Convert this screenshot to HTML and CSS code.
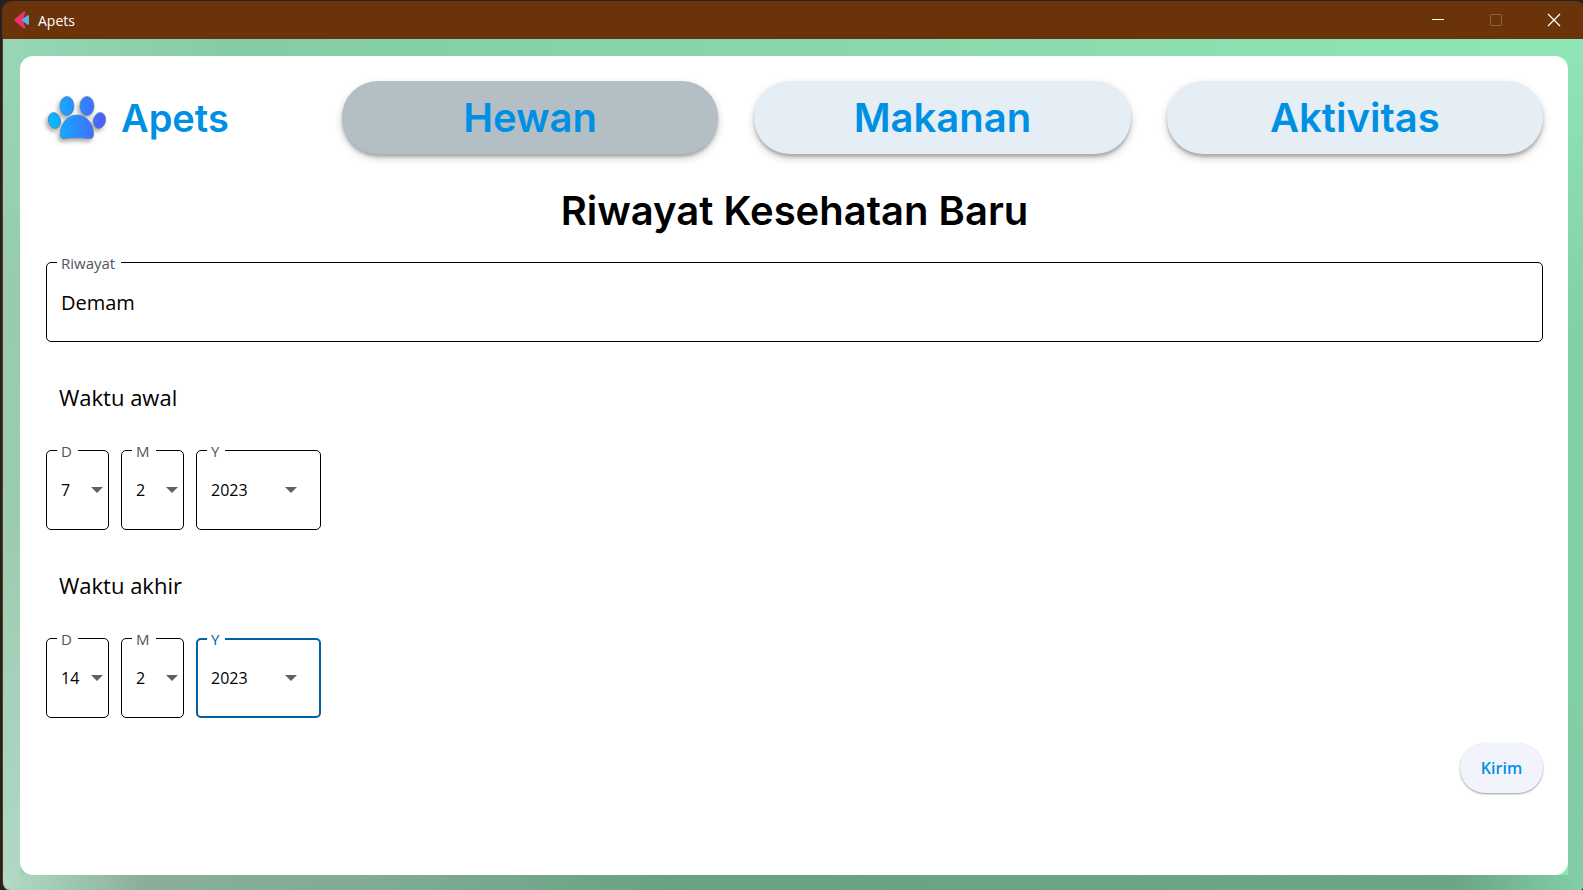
FILE: index.html
```html
<!DOCTYPE html>
<html lang="id">
<head>
<meta charset="utf-8">
<title>Apets</title>
<link rel="stylesheet" href="styles.css">
</head>
<body>
<div class="window">
  <header class="titlebar">
    <svg class="titlebar-icon" viewBox="0 0 16 18" aria-hidden="true">
      <path d="M10 .3Q11.500-.2 11.300 1.500L9 9l2.300 7.500q.2 1.700-1.300 1.200L1 10.200Q0 9 1 7.800z" fill="#ee316b"/>
      <path d="M7.500 9l5.500-4.500q2-.8 2 1V12.500q0 1.800-2 1z" fill="#54b5e0"/>
    </svg>
    <span class="titlebar-text">Apets</span>
    <div class="window-controls">
      <button class="window-button" type="button" aria-label="Minimize"><svg viewBox="0 0 12 12"><path d="M0 5.500h12" /></svg></button>
      <button class="window-button" type="button" aria-label="Maximize" disabled><svg viewBox="0 0 12 12"><rect x=".5" y=".5" width="11" height="11" rx="1"/></svg></button>
      <button class="window-button" type="button" aria-label="Close"><svg viewBox="0 0 12 12"><path d="M0 0l12 12M12 0L0 12" stroke-width="1.300"/></svg></button>
    </div>
  </header>
  <div class="backdrop">
    <main class="card">
      <div class="topbar">
        <a class="brand" href="#">
          <svg class="brand-logo" viewBox="1 -2 62 50" aria-hidden="true">
            <defs><linearGradient id="paw" gradientUnits="userSpaceOnUse" x1="3" y1="0" x2="61" y2="0"><stop offset="0" stop-color="#00c0ff"/><stop offset="1" stop-color="#5558ff"/></linearGradient></defs>
            <g fill="url(#paw)" stroke="#4f7fae" stroke-width=".7">
              <ellipse cx="22" cy="11" rx="7" ry="9.500"/>
              <ellipse cx="42" cy="11" rx="7" ry="9.500"/>
              <ellipse cx="9.500" cy="25.500" rx="6" ry="8" transform="rotate(-15 9.500 25.500)"/>
              <ellipse cx="54.500" cy="25.500" rx="6" ry="8" transform="rotate(15 54.500 25.500)"/>
              <path d="M15.500 40C15 28 23 20 32 20s17 8 16.500 20c-.2 3-2 4-5 3.500-7-1-16-1-23 0-3 .5-4.800-.5-5-3.500z"/>
            </g>
          </svg>
          <span class="brand-name">Apets</span>
        </a>
        <nav class="tabs">
          <button class="tab tab-active" type="button" aria-current="page">Hewan</button>
          <button class="tab" type="button">Makanan</button>
          <button class="tab" type="button">Aktivitas</button>
        </nav>
      </div>
      <h1 class="title">Riwayat Kesehatan Baru</h1>
      <form class="form">
        <div class="field">
          <label class="field-label" for="riwayat">Riwayat</label>
          <input class="control control-text" id="riwayat" type="text" value="Demam">
        </div>
        <h2 class="section">Waktu awal</h2>
        <div class="dates">
          <div class="field field-short">
            <label class="field-label" for="d1">D</label>
            <select class="control" id="d1"><option>7</option></select>
            <span class="arrow"></span>
          </div>
          <div class="field field-short">
            <label class="field-label" for="m1">M</label>
            <select class="control" id="m1"><option>2</option></select>
            <span class="arrow"></span>
          </div>
          <div class="field field-year">
            <label class="field-label" for="y1">Y</label>
            <select class="control" id="y1"><option>2023</option></select>
            <span class="arrow"></span>
          </div>
        </div>
        <h2 class="section">Waktu akhir</h2>
        <div class="dates">
          <div class="field field-short">
            <label class="field-label" for="d2">D</label>
            <select class="control" id="d2"><option>14</option></select>
            <span class="arrow"></span>
          </div>
          <div class="field field-short">
            <label class="field-label" for="m2">M</label>
            <select class="control" id="m2"><option>2</option></select>
            <span class="arrow"></span>
          </div>
          <div class="field field-year field-focused">
            <label class="field-label" for="y2">Y</label>
            <select class="control" id="y2"><option>2023</option></select>
            <span class="arrow"></span>
          </div>
        </div>
        <button class="submit" type="button">Kirim</button>
      </form>
    </main>
  </div>
</div>
</body>
</html>
```
FILE: styles.css
```css
* { box-sizing: border-box; }

body {
  margin: 0;
  background: #222;
  font-family: "Open Sans", "Noto Sans", sans-serif;
  color: #000;
}

button, input, select { font: inherit; color: inherit; }

.window {
  display: flex;
  flex-direction: column;
  min-height: 100vh;
  padding: 1px 0 0 2px;
}

.titlebar {
  display: flex;
  align-items: center;
  height: 38px;
  padding-left: 12px;
  background: #6b330a;
  border-radius: 10px 6px 0 0;
  color: #fff;
}

.titlebar-icon { width: 16px; height: 18px; }

.titlebar-text {
  margin-left: 8px;
  font-size: 14px;
}

.window-controls { display: flex; margin-left: auto; }

.window-button {
  display: grid;
  place-items: center;
  width: 58px;
  height: 38px;
  padding: 0;
  border: 0;
  background: none;
}

.window-button svg {
  width: 12px;
  height: 12px;
  fill: none;
  stroke: #fff;
  overflow: visible;
}

.window-button:disabled svg { stroke: #8f653f; }

.backdrop {
  display: flex;
  flex: 1;
  padding: 17px 15px 15px 17px;
  border-left: 1px solid #6b330a;
  border-radius: 0 0 4px 8px;
  background:
    linear-gradient(90deg, #b2dcc6, #8bae9b 9%, #7fab94 25%, #69a382 42%, #6ca685 92%, #82cfa6) bottom / 100% 15px no-repeat,
    linear-gradient(#8fe6b6, #83d0a6 35%, #82cda5) right / 15px 100% no-repeat,
    linear-gradient(#97d7b5, #97cbae 30%, #9ccdb3 60%, #b0d9c4) left / 17px 100% no-repeat,
    linear-gradient(90deg, #97d7b5, #84cca5 15%, #8fe6b6);
}

.card {
  flex: 1;
  min-width: 0;
  padding: 25px 25px 25px 26px;
  background: #fff;
  border-radius: 13px;
}

.topbar {
  display: flex;
  align-items: center;
}

.brand {
  display: flex;
  align-items: center;
  flex: 0 0 296px;
  gap: 13px;
  color: #0090e3;
  font-family: Inter, sans-serif;
  font-size: 38px;
  font-weight: 600;
  text-decoration: none;
}

.brand-logo {
  width: 62px;
  height: 50px;
  overflow: visible;
  filter: drop-shadow(-2px 3px 2px #0005);
}

.tabs {
  display: grid;
  flex: 1;
  grid-template-columns: repeat(3, 1fr);
  gap: 36px;
}

.tab {
  height: 73px;
  padding: 0;
  border: 0;
  border-radius: 36px;
  background: #e5edf5;
  box-shadow: 0 3px 3px #0003, 0 4px 8px #0003;
  color: #0090e3;
  font-family: Inter, sans-serif;
  font-size: 40px;
  font-weight: 600;
  line-height: 48px;
}

.tab-active { background: #b4bec5; }

.title {
  margin: 32px 0 26px;
  font-family: Inter, sans-serif;
  font-size: 40px;
  font-weight: 600;
  line-height: 50px;
  text-align: center;
}

.field {
  position: relative;
  height: 80px;
}

.field-short { width: 63px; }
.field-year { width: 125px; }

.field-label {
  position: absolute;
  top: -8px;
  left: 11px;
  padding: 0 6px 0 4px;
  background: #fff;
  color: #50545c;
  font-size: 15px;
  line-height: 18px;
}

.control {
  appearance: none;
  display: block;
  width: 100%;
  height: 100%;
  padding: 0 0 0 14px;
  border: 1px solid #000;
  border-radius: 5px;
  outline: 0;
  background: none;
  font-size: 16px;
}

.control-text {
  padding-left: 14px;
  font-size: 20px;
}

.field-focused .control {
  border: 2px solid #0061a4;
  padding-left: 13px;
}

.field-focused .field-label { color: #0061a4; }

.arrow {
  position: absolute;
  top: 37px;
  right: 6px;
  border: 6px solid transparent;
  border-top-color: #616161;
  border-bottom: 0;
  pointer-events: none;
}

.field-year .arrow { right: 24px; }

.section {
  margin: 40px 0 38px 13px;
  font-size: 22px;
  font-weight: 400;
  line-height: 30px;
}

.dates { display: flex; gap: 12px; }

.submit {
  display: block;
  margin: 25px 0 0 auto;
  width: 83px;
  height: 50px;
  padding: 0;
  border: 0;
  border-radius: 25px;
  background: #f1f5fb;
  box-shadow: 0 1px 2px #0006;
  color: #0090e3;
  font-size: 16px;
  font-weight: 600;
}
```
